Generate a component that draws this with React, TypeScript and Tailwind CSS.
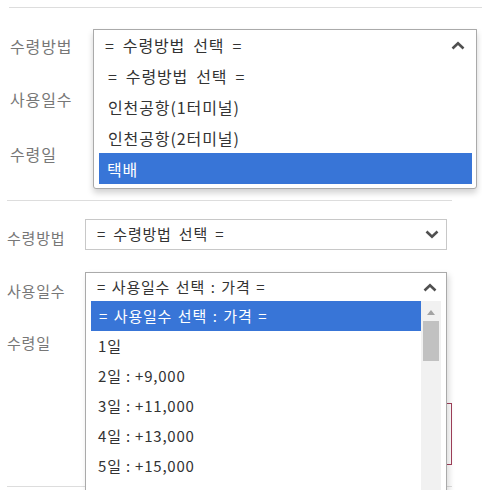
import React from "react";

const FONT = "font-['Noto_Sans_CJK_KR','Noto_Sans',sans-serif]";

function Chevron({ up }: { up?: boolean }) {
  return (
    <svg width="14" height="9" viewBox="0 0 14 9" className="shrink-0">
      <polyline
        points={up ? "1.5,7.5 7,2.2 12.5,7.5" : "1.5,1.5 7,6.8 12.5,1.5"}
        fill="none"
        stroke="#505050"
        strokeWidth="2.6"
      />
    </svg>
  );
}

/** First block: 16px text, method select open. */
function TopSection() {
  const methods = ["= 수령방법 선택 =", "인천공항(1터미널)", "인천공항(2터미널)", "택배"];
  return (
    <div className="text-[16px] tracking-[0.9px]">
      <div className="ml-[9px] mt-[7px] h-px bg-[#dddddd]" />
      <div className="pl-[10px]">
        {/* 수령방법 */}
        <div className="mt-[21px] flex h-[31px]">
          <div className="w-[83px] pt-[2px] leading-[31px] text-[#777]">수령방법</div>
          <div className="relative w-[384px]">
            <div className="h-[31px] border border-[#aaa]" />
            <div className="absolute left-0 top-0 z-10 w-[384px] rounded-b-[3px] border border-[#aaa] bg-white pb-[4px] shadow-[0_4px_6px_rgba(0,0,0,0.18)]">
              <div className="flex h-[30px] items-center pl-[11px] pr-[11px] text-[#333]">
                <span className="flex-1 [word-spacing:3.5px]">= 수령방법 선택 =</span>
                <Chevron up />
              </div>
              <div className="ml-[5px] mr-[4px]">
                {methods.map((m, i) => (
                  <div
                    key={m}
                    className={
                      i === methods.length - 1
                        ? "flex h-[31px] items-center bg-[#3875d7] pl-[8px] text-white"
                        : i === 0
                          ? "flex h-[31px] items-center pl-[9px] text-[#333] [word-spacing:3.5px]"
                          : "flex h-[31px] items-center pl-[9px] text-[#333]"
                    }
                  >
                    {m}
                  </div>
                ))}
              </div>
            </div>
          </div>
        </div>
        {/* 사용일수 */}
        <div className="mt-[22px] flex h-[31px]">
          <div className="w-[83px] pt-[2px] leading-[31px] text-[#777]">사용일수</div>
          <div className="h-[31px] w-[384px] border border-[#ccc]" />
        </div>
        {/* 수령일 */}
        <div className="mt-[24px] flex h-[31px]">
          <div className="w-[83px] pt-[2px] leading-[31px] text-[#777]">수령일</div>
          <div className="h-[31px] w-[384px] border border-[#ccc]" />
        </div>
      </div>
    </div>
  );
}

/** Second block: 15px text, days select open with a scrollbar. */
function BottomSection() {
  const days = [
    "= 사용일수 선택 : 가격 =",
    "1일",
    "2일 : +9,000",
    "3일 : +11,000",
    "4일 : +13,000",
    "5일 : +15,000",
  ];
  return (
    <div className="text-[15px] tracking-[0.8px]">
      <div className="ml-[7px] mt-[32px] h-px w-[445px] bg-[#dddddd]" />
      <div className="pl-[7px]">
        {/* 수령방법 */}
        <div className="mt-[18px] flex h-[31px]">
          <div className="w-[78px] pt-[3px] leading-[31px] text-[#777]">수령방법</div>
          <div className="flex h-[31px] w-[362px] items-center border border-[#c8c8c8] pl-[11px] pr-[7px] text-[#333]">
            <span className="flex-1 [word-spacing:3px]">= 수령방법 선택 =</span>
            <Chevron />
          </div>
        </div>
        {/* 사용일수 */}
        <div className="mt-[22px] flex h-[31px]">
          <div className="w-[78px] pt-[3px] leading-[31px] text-[#777]">사용일수</div>
          <div className="relative w-[362px]">
            <div className="h-[31px] border border-[#aaa]" />
            <div className="absolute left-0 top-0 z-10 h-[240px] w-[362px] border border-[#aaa] bg-white shadow-[2px_3px_6px_rgba(0,0,0,0.15)]">
              <div className="flex h-[28px] items-center pl-[11px] pr-[9px] text-[#333]">
                <span className="flex-1 [word-spacing:1.5px]">= 사용일수 선택 : 가격 =</span>
                <Chevron up />
              </div>
              <div className="ml-[5px] flex w-[350px]">
                <div className="h-[220px] w-[330px]">
                  {days.map((d, i) => (
                    <div
                      key={d}
                      className={
                        i === 0
                          ? "flex h-[30px] items-center bg-[#3875d7] pl-[8px] text-white [word-spacing:1.5px]"
                          : "flex h-[30px] items-center pl-[7px] text-[#333]"
                      }
                    >
                      {d}
                    </div>
                  ))}
                </div>
                <div className="flex w-[20px] flex-col items-center bg-[#f1f1f1]">
                  <svg width="10" height="6" viewBox="0 0 10 6" className="mt-[8px]">
                    <polygon points="1,6 5,1 9,6" fill="#a3a3a3" />
                  </svg>
                  <div className="mt-[6px] h-[40px] w-[16px] bg-[#c1c1c1]" />
                </div>
              </div>
            </div>
          </div>
        </div>
        {/* 수령일 */}
        <div className="mt-[21px] flex">
          <div className="w-[78px] pt-[3px] leading-[31px] text-[#777]">수령일</div>
          <div className="flex flex-col">
            <div className="h-[31px] w-[362px] border border-[#ccc]" />
            <div className="mt-[48px] h-[62px] w-[367px] border border-[#a0405a]" />
          </div>
        </div>
      </div>
      <div className="ml-[7px] mt-[21px] h-px w-[445px] bg-[#dddddd]" />
    </div>
  );
}

export default function App() {
  return (
    <div className={`h-[490px] w-[482px] overflow-hidden bg-white ${FONT}`}>
      <TopSection />
      <BottomSection />
    </div>
  );
}
